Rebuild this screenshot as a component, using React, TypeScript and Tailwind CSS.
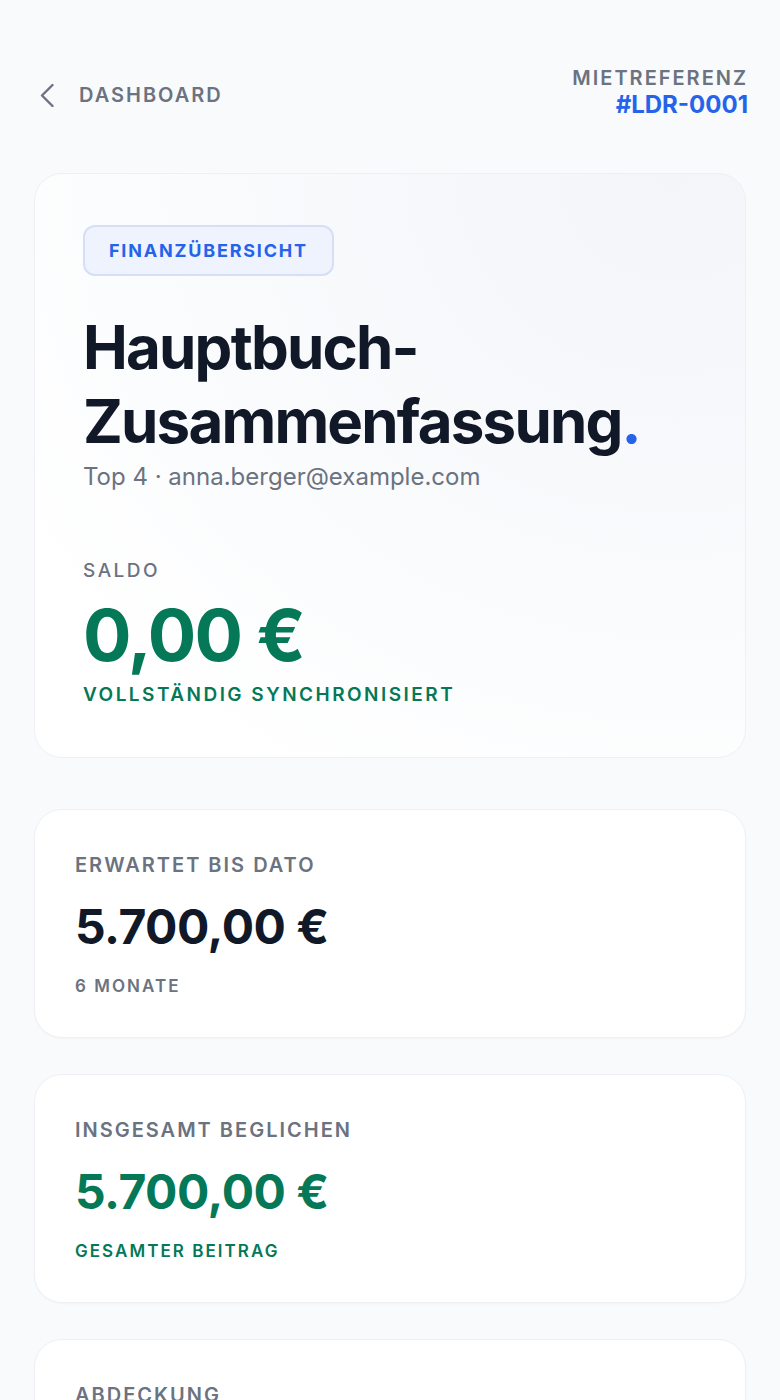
import React from "react";

const font = { fontFamily: "Inter, 'Noto Sans', sans-serif" };

function StatCard({ label, value, sub, green }: { label: string; value: string; sub: string; green?: boolean }) {
  return (
    <div className="rounded-[28px] bg-white border border-[#eef0f3] px-10 pt-[43px] pb-[40px] shadow-[0_1px_2px_rgba(15,23,42,0.03)]">
      <div className="text-[20px] leading-[24px] font-semibold tracking-[0.1em] text-[#6b7280]">{label}</div>
      <div className={`mt-[24px] text-[48px] leading-[52px] font-bold tracking-[-0.01em] ${green ? "text-[#047857]" : "text-[#111827]"}`}>{value}</div>
      <div className={`mt-[22px] text-[17px] leading-[22px] font-semibold tracking-[0.12em] ${green ? "text-[#047857]" : "text-[#6b7280]"}`}>{sub}</div>
    </div>
  );
}

export default function App() {
  return (
    <div style={font} className="min-h-[1400px] bg-[#f8fafc] px-[34px] pt-[66px]">
      <header className="flex items-start justify-between">
        <div className="flex items-center gap-[25px] pl-[6px] pt-[17px]">
          <svg width="14" height="24" viewBox="0 0 14 24" fill="none">
            <path d="M12.5 2 L2 12.5 L12.5 23" stroke="#6b7280" strokeWidth="2.4" strokeLinecap="round" strokeLinejoin="round" />
          </svg>
          <span className="text-[20px] leading-[24px] font-semibold tracking-[0.1em] text-[#6b7280]">DASHBOARD</span>
        </div>
        <div className="flex flex-col items-end">
          <span className="text-[20px] leading-[24px] font-semibold tracking-[0.1em] text-[#6b7280] mr-[-2px]">MIETREFERENZ</span>
          <span className="text-[24px] leading-[30px] font-bold text-[#2563eb] mr-[-2px]">#LDR-0001</span>
        </div>
      </header>

      <section className="mt-[53px] rounded-[28px] border border-[#eef0f3] bg-[radial-gradient(ellipse_at_90%_0%,#f3f5f9_0%,#f8fafc_45%,#ffffff_85%)] px-[48px] pt-[51px] pb-[50px]">
        <div className="inline-flex h-[51px] items-center rounded-[12px] border-2 border-[#d6def8] bg-[#eef3fd] px-[24px]">
          <span className="text-[18px] font-bold tracking-[0.1em] text-[#2563eb]">FINANZÜBERSICHT</span>
        </div>
        <h1 className="mt-[34px] text-[60px] leading-[74px] font-bold tracking-[-0.03em] text-[#111827]">
          Hauptbuch-
          <br />
          Zusammenfassung<span className="text-[#2563eb]">.</span>
        </h1>
        <p className="mt-[3px] text-[24px] leading-[32px] text-[#6b7280]">Top 4 · anna.berger@example.com</p>

        <div className="mt-[66px] text-[19px] leading-[24px] font-medium tracking-[0.13em] text-[#6b7280]">SALDO</div>
        <div className="mt-[10px] text-[72px] leading-[84px] font-bold tracking-[-0.025em] text-[#047857]">0,00 €</div>
        <div className="mt-[6px] text-[19px] leading-[24px] font-semibold tracking-[0.13em] text-[#047857]">VOLLSTÄNDIG SYNCHRONISIERT</div>
      </section>

      <div className="mt-[51px] flex flex-col gap-[36px]">
        <StatCard label="ERWARTET BIS DATO" value="5.700,00 €" sub="6 MONATE" />
        <StatCard label="INSGESAMT BEGLICHEN" value="5.700,00 €" sub="GESAMTER BEITRAG" green />
        <StatCard label="ABDECKUNG" value="100 %" sub="DER ERWARTETEN ZAHLUNGEN" />
      </div>
    </div>
  );
}
